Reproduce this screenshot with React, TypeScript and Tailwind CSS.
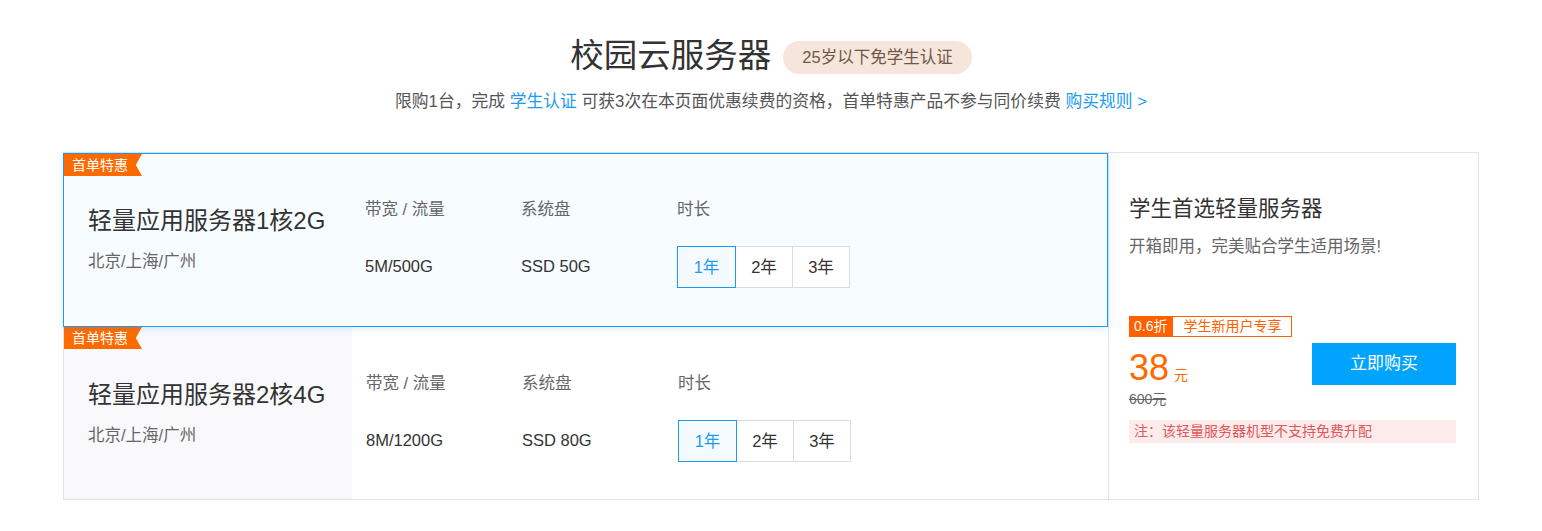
const font = "font-['Liberation_Sans','Noto_Sans_CJK_SC',sans-serif]";

const plans = [
  { name: "轻量应用服务器1核2G", region: "北京/上海/广州", bandwidth: "5M/500G", disk: "SSD 50G", active: true },
  { name: "轻量应用服务器2核4G", region: "北京/上海/广州", bandwidth: "8M/1200G", disk: "SSD 80G", active: false },
];

const years = ["1年", "2年", "3年"];

function Tag() {
  return (
    <div className="absolute left-0 top-0 h-[22px] w-[78px] bg-[#ff6a00] pl-[8px] text-[14px] leading-[22px] text-white [clip-path:polygon(0_0,100%_0,92%_50%,100%_100%,0_100%)]">
      首单特惠
    </div>
  );
}

function PlanRow({ plan }: { plan: (typeof plans)[number] }) {
  return (
    <div
      className={
        plan.active
          ? "relative z-10 -ml-px flex h-[174px] border border-[#1e9bf0] bg-[#f7fcff] shadow-[0_2px_8px_rgba(0,140,255,0.15)]"
          : "relative flex h-[172px]"
      }
    >
      <Tag />
      <div className={plan.active ? "w-[287px] pl-[24px] pt-[51px]" : "w-[288px] bg-[#f9f9fb] pl-[24px] pt-[52px]"}>
        <div className="text-[24px] leading-[32px] text-[#333]">{plan.name}</div>
        <div className="mt-[12px] text-[16.5px] leading-[24px] text-[#666]">{plan.region}</div>
      </div>
      <div className={plan.active ? "flex pl-[14px] pt-[43px]" : "flex pl-[14px] pt-[44px]"}>
        <div className="w-[156px]">
          <div className="text-[16.5px] leading-[24px] text-[#666]">带宽 / 流量</div>
          <div className="mt-[33px] text-[16.5px] leading-[24px] text-[#333]">{plan.bandwidth}</div>
        </div>
        <div className="w-[156px]">
          <div className="text-[16.5px] leading-[24px] text-[#666]">系统盘</div>
          <div className="mt-[33px] text-[16.5px] leading-[24px] text-[#333]">{plan.disk}</div>
        </div>
        <div>
          <div className="text-[16.5px] leading-[24px] text-[#666]">时长</div>
          <div className="mt-[25px] flex">
            {years.map((y, i) => (
              <div
                key={y}
                className={
                  i === 0
                    ? "relative z-10 flex h-[42px] w-[59px] items-center justify-center border border-[#1e9bf0] bg-[#f4faff] text-[16.5px] text-[#1e9bf0]"
                    : "-ml-px flex h-[42px] w-[58px] items-center justify-center border border-[#dcdcdc] bg-white text-[16.5px] text-[#333]"
                }
              >
                {y}
              </div>
            ))}
          </div>
        </div>
      </div>
    </div>
  );
}

export default function App() {
  return (
    <div className={`w-full bg-white pt-[34px] pb-[31px] ${font}`}>
      <div className="flex h-[44px] items-center justify-center gap-[12px]">
        <h1 className="text-[33.5px] leading-[44px] text-[#333]">校园云服务器</h1>
        <span className="mt-[3px] rounded-full bg-[#f6e5db] px-[19px] text-[16.5px] leading-[33px] text-[#6e5748]">
          25岁以下免学生认证
        </span>
      </div>
      <p className="mt-[12px] text-center text-[16.8px] leading-[24px] text-[#555]">
        限购1台，完成 <span className="text-[#1e9bf0]">学生认证</span> 可获3次在本页面优惠续费的资格，首单特惠产品不参与同价续费{" "}
        <span className="text-[#1e9bf0]">购买规则 &gt;</span>
      </p>

      <div className="mx-auto mt-[38px] flex w-[1416px] border border-[#e3e3e3]">
        <div className="flex w-[1044px] flex-col">
          {plans.map((p) => (
            <PlanRow key={p.name} plan={p} />
          ))}
        </div>
        <div className="flex-1 border-l border-[#e3e3e3] pl-[20px] pr-[22px] pt-[42px]">
          <div className="text-[21.5px] leading-[28px] text-[#333]">学生首选轻量服务器</div>
          <div className="mt-[12px] text-[16.5px] leading-[22px] text-[#666]">开箱即用，完美贴合学生适用场景!</div>

          <div className="mt-[59px] flex h-[21px]">
            <span className="bg-[#ff6000] px-[5px] text-[14px] leading-[21px] text-white">0.6折</span>
            <span className="border border-[#ff6000] px-[10px] text-[14px] leading-[19px] text-[#ff6000]">学生新用户专享</span>
          </div>
          <div className="flex justify-between">
            <div className="mt-[13px]">
              <div className="flex h-[36px] items-baseline leading-[36px]">
                <span className="text-[36px] text-[#ff6a00]">38</span>
                <span className="ml-[5px] text-[14px] leading-[20px] text-[#ff6a00]">元</span>
              </div>
              <div className="mt-[4px] text-[14px] leading-[18px] text-[#666] line-through">600元</div>
            </div>
            <button className="mt-[6px] h-[42px] w-[144px] bg-[#00a4ff] text-[17px] text-white">立即购买</button>
          </div>
          <div className="mt-[12px] bg-[#fbeceb] pl-[5px] text-[14px] leading-[23px] text-[#e0565a]">
            注：该轻量服务器机型不支持免费升配
          </div>
        </div>
      </div>
    </div>
  );
}
